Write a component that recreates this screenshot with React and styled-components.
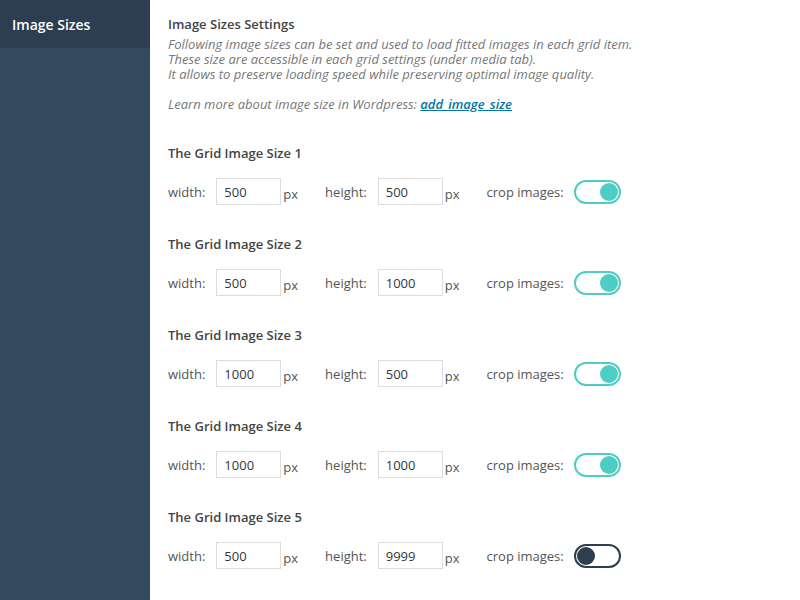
import React, { useState } from "react";
import styled, { createGlobalStyle } from "styled-components";

const sizes = [
  { w: "500", h: "500", crop: true },
  { w: "500", h: "1000", crop: true },
  { w: "1000", h: "500", crop: true },
  { w: "1000", h: "1000", crop: true },
  { w: "500", h: "9999", crop: false },
];

const SizeRow = ({ index, size }) => {
  const [crop, setCrop] = useState(size.crop);
  return (
    <Section>
      <SectionTitle>The Grid Image Size {index}</SectionTitle>
      <Row>
        <Label>width:</Label>
        <Input defaultValue={size.w} />
        <Unit>px</Unit>
        <Label>height:</Label>
        <Input defaultValue={size.h} />
        <Unit>px</Unit>
        <Label>crop images:</Label>
        <Toggle $on={crop} onClick={() => setCrop(!crop)}>
          <Knob $on={crop} />
        </Toggle>
      </Row>
    </Section>
  );
};

const App = () => {
  return (
    <>
      <GlobalStyle />
      <Page>
        <Sidebar>
          <NavItem $active>Image Sizes</NavItem>
        </Sidebar>

        <Content>
          <Title>Image Sizes Settings</Title>
          <Desc>
            Following image sizes can be set and used to load fitted images in each grid item.
            <br />
            These size are accessible in each grid settings (under media tab).
            <br />
            It allows to preserve loading speed while preserving optimal image quality.
            <br />
            <br />
            Learn more about image size in Wordpress: <DocLink href="#">add_image_size</DocLink>
          </Desc>

          {sizes.map((s, i) => (
            <SizeRow key={i} index={i + 1} size={s} />
          ))}
        </Content>
      </Page>
    </>
  );
};

export default App;

/* -------------------- STYLES -------------------- */

const GlobalStyle = createGlobalStyle`
  html, body {
    margin: 0;
    padding: 0;
    background: #fff;
    font-family: "Open Sans", "Liberation Sans", sans-serif;
  }
`;

const Page = styled.div`
  display: flex;
  width: 800px;
  height: 600px;
  overflow: hidden;
`;

const Sidebar = styled.div`
  width: 150px;
  flex-shrink: 0;
  background: #34495e;
`;

const NavItem = styled.div`
  height: 48px;
  display: flex;
  align-items: center;
  padding-left: 12px;
  background: ${(p) => (p.$active ? "#2c3e50" : "transparent")};
  color: #fff;
  font-size: 14px;
  font-weight: 600;
`;

const Content = styled.div`
  flex: 1;
  padding: 15px 0 0 18px;
`;

const Title = styled.div`
  font-size: 13px;
  font-weight: 600;
  color: #444;
  line-height: 18px;
`;

const Desc = styled.p`
  margin: 4px 0 0;
  font-size: 13px;
  font-style: italic;
  line-height: 15px;
  color: #777;
`;

const DocLink = styled.a`
  color: #0074a2;
  font-weight: 600;
  text-decoration: underline;
`;

const Section = styled.div`
  margin-top: 32px;

  & + & {
    margin-top: 30px;
  }
`;

const SectionTitle = styled.div`
  font-size: 13px;
  font-weight: 600;
  color: #444;
  line-height: 18px;
`;

const Row = styled.div`
  display: flex;
  align-items: center;
  margin-top: 16px;
  height: 27px;
`;

const Label = styled.span`
  font-size: 13px;
  color: #555;
  margin-right: 10px;
`;

const Input = styled.input`
  box-sizing: border-box;
  width: 65px;
  height: 27px;
  margin-left: 1px;
  border: 1px solid #ddd;
  padding: 0 7px;
  font-family: inherit;
  font-size: 13px;
  color: #32373c;
  outline: none;
`;

const Unit = styled.span`
  font-size: 13px;
  color: #555;
  margin: 4px 27px 0 2px;
`;

const Toggle = styled.div`
  box-sizing: border-box;
  width: 47px;
  height: 24px;
  border-radius: 12px;
  border: 2px solid ${(p) => (p.$on ? "#4ecdc4" : "#2c3e50")};
  padding: 1px;
  display: flex;
  justify-content: ${(p) => (p.$on ? "flex-end" : "flex-start")};
  cursor: pointer;
`;

const Knob = styled.div`
  width: 18px;
  height: 18px;
  border-radius: 50%;
  background: ${(p) => (p.$on ? "#4ecdc4" : "#2c3e50")};
`;
